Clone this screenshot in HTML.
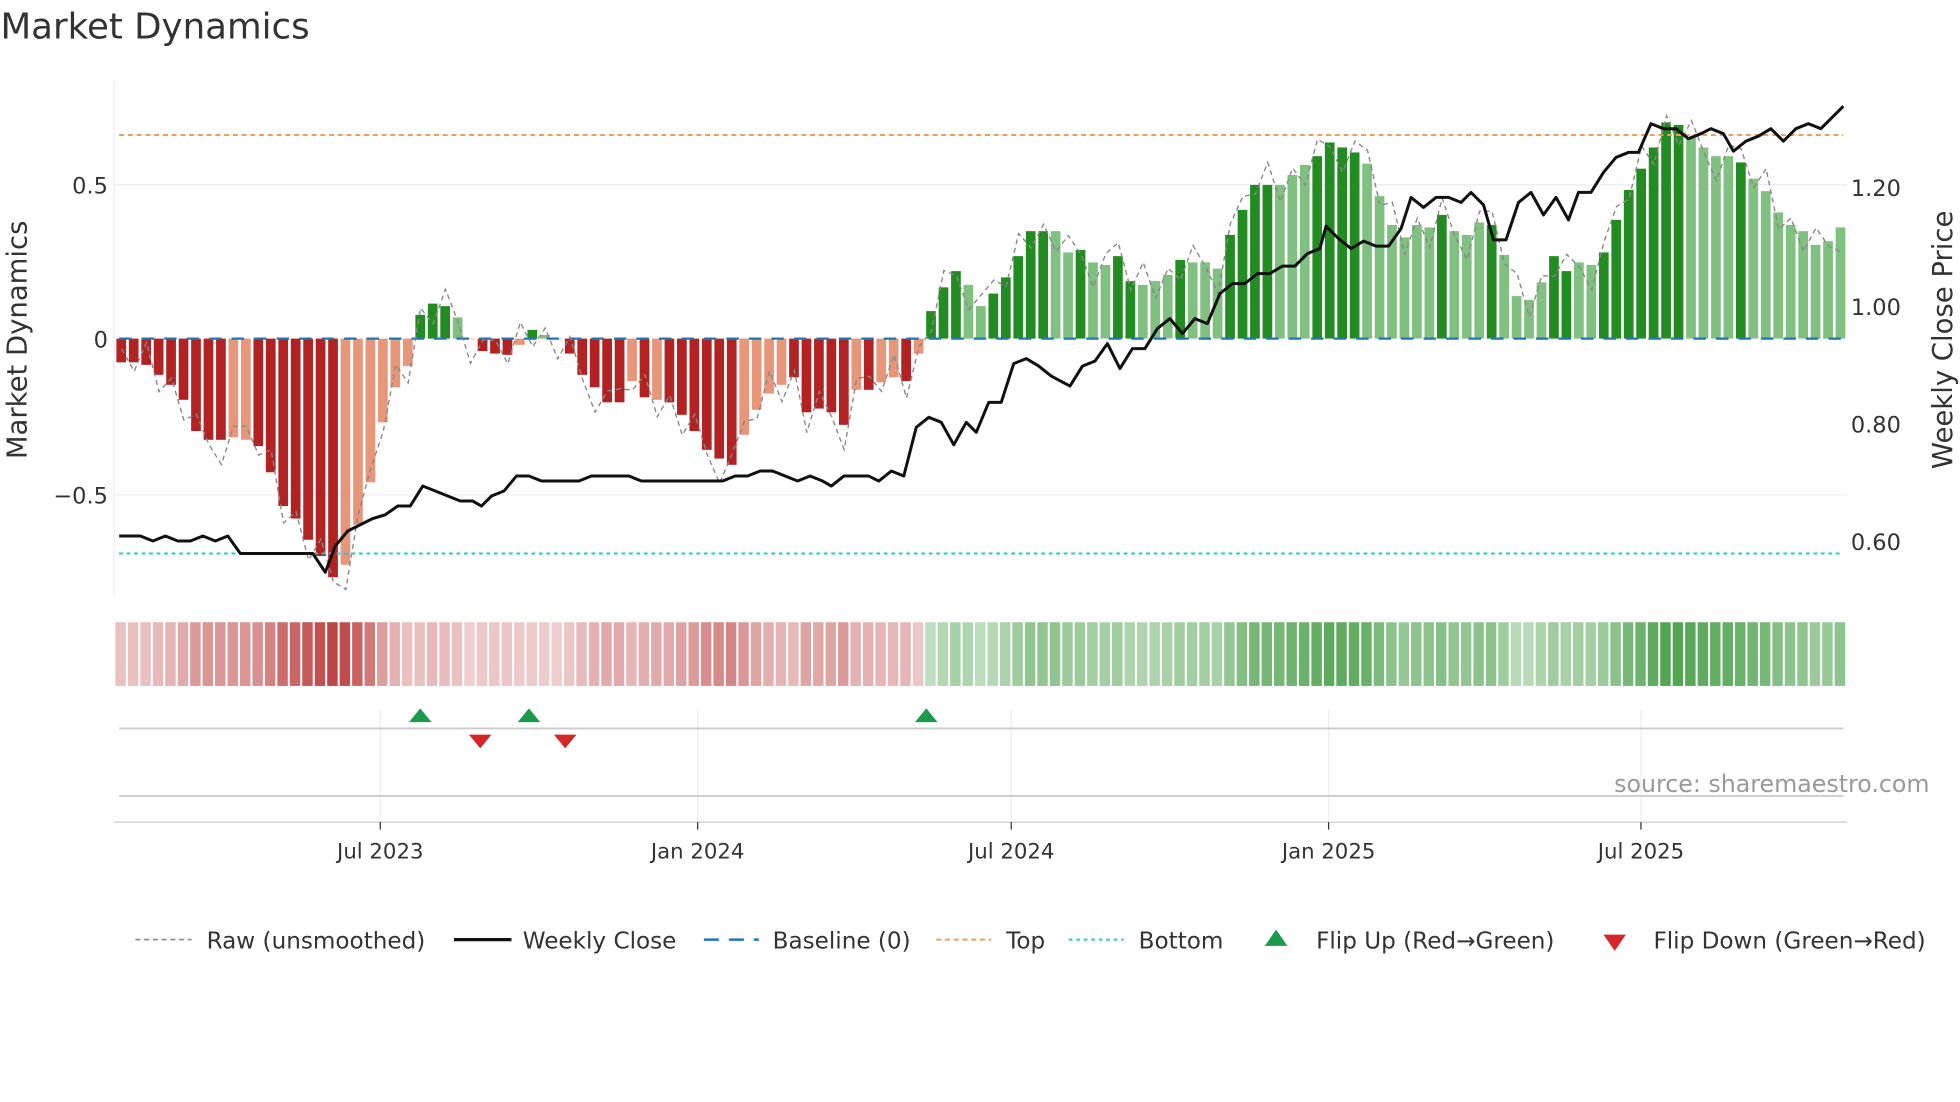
<!DOCTYPE html>
<html><head><meta charset="utf-8"><style>
html,body{margin:0;padding:0;background:#fff;width:1960px;height:1102px;overflow:hidden}
svg{display:block}
text{font-family:"DejaVu Sans","Liberation Sans",sans-serif;fill:#333}
</style></head><body>
<svg id="s" width="1960" height="1102" viewBox="0 0 1568 882" xmlns="http://www.w3.org/2000/svg">
<rect width="1568" height="882" fill="#fff"/>
<text x="0" y="31" font-size="28.5">Market Dynamics</text>
<line x1="91" y1="65" x2="91" y2="478" stroke="#eee" stroke-width="1"/>
<line x1="91" y1="148" x2="1478" y2="148" stroke="#e8ecef" stroke-width="1"/>
<line x1="91" y1="396" x2="1478" y2="396" stroke="#eef0f2" stroke-width="1"/>
<text x="86" y="155" font-size="18" text-anchor="end">0.5</text>
<text x="86" y="278" font-size="18" text-anchor="end">0</text>
<text x="86" y="403" font-size="18" text-anchor="end">−0.5</text>
<text x="1481" y="157" font-size="18">1.20</text>
<text x="1481" y="252" font-size="18">1.00</text>
<text x="1481" y="346" font-size="18">0.80</text>
<text x="1481" y="440" font-size="18">0.60</text>
<text transform="translate(21,272) rotate(-90)" font-size="22" text-anchor="middle">Market Dynamics</text>
<text transform="translate(1562,272) rotate(-90)" font-size="22" text-anchor="middle">Weekly Close Price</text>
<g id="bars"></g>
<line x1="95" y1="108" x2="1475" y2="108" stroke="#e8a060" stroke-width="1.6" stroke-dasharray="4,3"/>
<line x1="95" y1="443" x2="1475" y2="443" stroke="#20c8d8" stroke-width="1.6" stroke-dasharray="3,3"/>
<line x1="95" y1="271" x2="1475" y2="271" stroke="#1f77b4" stroke-width="1.8" stroke-dasharray="10,8"/>
<polyline id="raw" fill="none" stroke="#888" stroke-width="1.1" stroke-dasharray="4,3"/>
<polyline id="close" fill="none" stroke="#111" stroke-width="2.4" stroke-linejoin="round"/>
<g id="heat"></g>
<g stroke="#eee" stroke-width="1">
<line x1="304" y1="568" x2="304" y2="658"/><line x1="558" y1="568" x2="558" y2="658"/><line x1="809" y1="568" x2="809" y2="658"/><line x1="1063" y1="568" x2="1063" y2="658"/><line x1="1313" y1="568" x2="1313" y2="658"/>
</g>
<line x1="95" y1="583" x2="1475" y2="583" stroke="#ccc" stroke-width="1.5"/>
<line x1="95" y1="637" x2="1475" y2="637" stroke="#ccc" stroke-width="1.5"/>
<line x1="91" y1="658" x2="1478" y2="658" stroke="#ccc" stroke-width="1"/>
<g fill="#1a9a4a"><polygon points="336,567 327,578 345,578"/><polygon points="423,567 414,578 432,578"/><polygon points="741,567 732,578 750,578"/></g>
<g fill="#d62728"><polygon points="384,599 375,588 393,588"/><polygon points="452,599 443,588 461,588"/></g>
<text x="1544" y="634" font-size="19" text-anchor="end" style="fill:#999">source: sharemaestro.com</text>
<g stroke="#333" stroke-width="1"><line x1="304" y1="658" x2="304" y2="664"/><line x1="558" y1="658" x2="558" y2="664"/><line x1="809" y1="658" x2="809" y2="664"/><line x1="1063" y1="658" x2="1063" y2="664"/><line x1="1313" y1="658" x2="1313" y2="664"/></g>
<g font-size="17" text-anchor="middle">
<text x="304" y="687">Jul 2023</text><text x="558" y="687">Jan 2024</text><text x="809" y="687">Jul 2024</text><text x="1063" y="687">Jan 2025</text><text x="1313" y="687">Jul 2025</text>
</g>
<g font-size="18.5">
<line x1="108" y1="752" x2="153" y2="752" stroke="#888" stroke-width="1.3" stroke-dasharray="4,3"/>
<text x="165" y="759">Raw (unsmoothed)</text>
<line x1="363" y1="752" x2="409" y2="752" stroke="#111" stroke-width="2.6"/>
<text x="418" y="759">Weekly Close</text>
<line x1="563" y1="752" x2="607" y2="752" stroke="#1f77b4" stroke-width="2" stroke-dasharray="12,8"/>
<text x="618" y="759">Baseline (0)</text>
<line x1="749" y1="752" x2="793" y2="752" stroke="#e8a060" stroke-width="1.6" stroke-dasharray="4,3"/>
<text x="805" y="759">Top</text>
<line x1="855" y1="752" x2="899" y2="752" stroke="#20c8d8" stroke-width="1.6" stroke-dasharray="3,3"/>
<text x="911" y="759">Bottom</text>
<polygon points="1021,744 1012,757 1030,757" fill="#1a9a4a"/>
<text x="1053" y="759">Flip Up (Red→Green)</text>
<polygon points="1292,761 1283,748 1301,748" fill="#d62728"/>
<text x="1323" y="759">Flip Down (Green→Red)</text>
</g>
</svg>
<script>
var red=[[290,'d'],[290,'d'],[292,'d'],[300,'d'],[308,'d'],[320,'d'],[345,'d'],[352,'d'],[352,'d'],[350,'l'],[352,'l'],[357,'d'],[378,'d'],[405,'d'],[415,'d'],[432,'d'],[445,'d'],[462,'d'],[452,'l'],[420,'l'],[386,'l'],[338,'l'],[310,'l'],[293,'l'],
[252,'d'],[243,'d'],[245,'d'],[254,'l'],
[271,'l'],[281,'d'],[283,'d'],[284,'d'],[276,'l'],[264,'d'],[268,'l'],[271,'l'],[283,'d'],[300,'d'],[310,'d'],[322,'d'],[322,'d'],[305,'l'],[318,'d'],[320,'l'],[322,'d'],[332,'d'],[345,'d'],[360,'d'],[367,'d'],[372,'d'],[348,'l'],[328,'l'],[315,'l'],[308,'l'],[302,'d'],[330,'d'],[327,'d'],[330,'d'],[340,'d'],[312,'l'],[312,'d'],[306,'l'],[302,'l'],[305,'d'],[283,'l']];
var g=[249,230,217,228,245,235,222,205,185,185,185,202,200,210,212,205,225,228,225,220,208,210,210,215,188,168,148,148,148,140,132,125,114,118,122,131,157,180,190,180,182,172,185,188,178,180,204,237,240,226,205,217,210,212,202,176,152,135,118,98,100,110,118,125,125,130,143,153,170,180,185,196,193,182];
var gc="dddlldddddlldllddllldlllddddlllddddlllllldllldllllddlldddddddlllldlllllllld";
var all=red.slice();
g.forEach(function(v,i){all.push([v,gc[i]||'l']);});
var n=all.length, x0=92, W=1386/n, ns="http://www.w3.org/2000/svg";
var B=document.getElementById('bars'),H=document.getElementById('heat'),raw=[];
all.forEach(function(b,i){
 var y=b[0],x=x0+i*W,pos=y<271;
 var col=pos?(b[1]=='d'?'#228b22':'#80c080'):(b[1]=='d'?'#b22222':'#e8967a');
 var r=document.createElementNS(ns,'rect');
 r.setAttribute('x',x+0.8);r.setAttribute('width',W-2.2);
 r.setAttribute('y',Math.min(y,271));r.setAttribute('height',Math.max(Math.abs(y-271),0.5));
 r.setAttribute('fill',col);B.appendChild(r);
 var h=document.createElementNS(ns,'rect');
 var m=Math.min(Math.abs(y-271)/190,1);
 h.setAttribute('x',x);h.setAttribute('width',W-1.6);h.setAttribute('y',498);h.setAttribute('height',51);
 h.setAttribute('fill',i<65?'rgb(178,34,34)':'rgb(34,139,34)');
 h.setAttribute('opacity',(0.22+m*0.62).toFixed(2));H.appendChild(h);
 var jit=[-12,8,-20,15,-6,18,-15,4,22,-10][i%10];
 raw.push((x+W/2).toFixed(1)+','+(y+jit*0.9).toFixed(1));
});
document.getElementById('raw').setAttribute('points',raw.join(' '));
document.getElementById('close').setAttribute('points',"95,429 112,429 122,433 132,429 142,433 152,433 162,429 172,433 182,429 192,443 250,443 260,458 268,437 278,425 298,415 308,412 318,405 328,405 338,389 348,393 358,397 368,401 378,401 385,405 393,397 403,393 413,381 423,381 433,385 463,385 473,381 503,381 513,385 578,385 588,381 598,381 608,377 618,377 628,381 638,385 648,381 658,385 665,389 675,381 695,381 703,385 713,377 723,381 733,342 743,334 753,338 763,356 773,338 781,346 791,322 801,322 811,291 821,287 831,293 841,301 856,309 866,293 876,289 886,275 896,295 906,279 916,279 926,263 936,255 946,267 956,255 966,259 976,235 986,227 996,227 1006,219 1016,219 1026,213 1036,213 1046,203 1056,199 1061,181 1071,191 1081,199 1091,193 1101,197 1111,197 1121,183 1129,158 1139,166 1149,158 1159,158 1169,162 1177,154 1187,164 1195,192 1205,192 1215,162 1225,154 1235,172 1245,158 1255,176 1263,154 1273,154 1283,138 1293,126 1303,122 1311,122 1321,99 1331,103 1341,103 1351,111 1361,107 1369,103 1379,107 1387,121 1397,113 1407,109 1417,103 1427,113 1437,103 1447,99 1457,103 1475,85");
</script>
</body></html>
